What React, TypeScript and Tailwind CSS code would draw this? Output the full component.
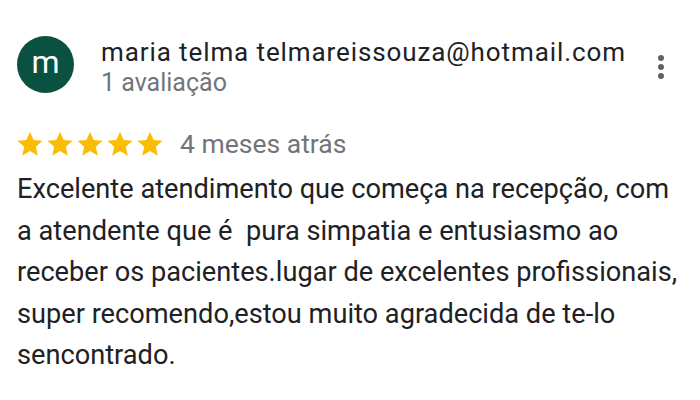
import React from "react";

const Star = () => (
  <svg width="30" height="30" viewBox="0 0 24 24" className="block">
    <path
      d="M12 2.2l2.9 6.6 7.2.6-5.5 4.8 1.7 7.1L12 17.5l-6.3 3.8 1.7-7.1-5.5-4.8 7.2-.6z"
      fill="#fbbc04"
    />
  </svg>
);

export default function App() {
  return (
    <div
      className="w-[700px] h-[400px] bg-white overflow-hidden"
      style={{ fontFamily: "Roboto, 'Noto Sans', sans-serif" }}
    >
      <div className="pl-[17px] pr-[20px] pt-[36px]">
        <div className="flex items-start">
          <div className="w-[57px] h-[57px] rounded-full bg-[#0b5142] flex items-center justify-center shrink-0">
            <span className="text-white text-[32px] leading-none -mt-[5px]">m</span>
          </div>
          <div className="ml-[27px] flex-1 flex flex-col">
            <div className="text-[26px] leading-[32px] tracking-[0.9px] text-[#202124] whitespace-nowrap">
              maria telma telmareissouza@hotmail.com
            </div>
            <div className="text-[25px] leading-[30px] text-[#70757a]">1 avaliação</div>
          </div>
          <div className="flex flex-col gap-[3px] mt-[19px] mr-[16px]">
            <span className="w-[6px] h-[6px] rounded-full bg-[#5f6368]" />
            <span className="w-[6px] h-[6px] rounded-full bg-[#5f6368]" />
            <span className="w-[6px] h-[6px] rounded-full bg-[#5f6368]" />
          </div>
        </div>
        <div className="flex items-center mt-[31px]">
          <div className="flex -ml-[2px]">
            <Star />
            <Star />
            <Star />
            <Star />
            <Star />
          </div>
          <span className="ml-[15px] text-[26.5px] leading-[30px] text-[#70757a]">4 meses atrás</span>
        </div>
        <p className="mt-[10px] text-[27.2px] leading-[41.5px] text-[#202124] w-[680px] whitespace-pre">
          {"Excelente atendimento que começa na recepção, com\na atendente que é  pura simpatia e entusiasmo ao\nreceber os pacientes.lugar de excelentes profissionais,\nsuper recomendo,estou muito agradecida de te-lo\nsencontrado."}
        </p>
      </div>
    </div>
  );
}
